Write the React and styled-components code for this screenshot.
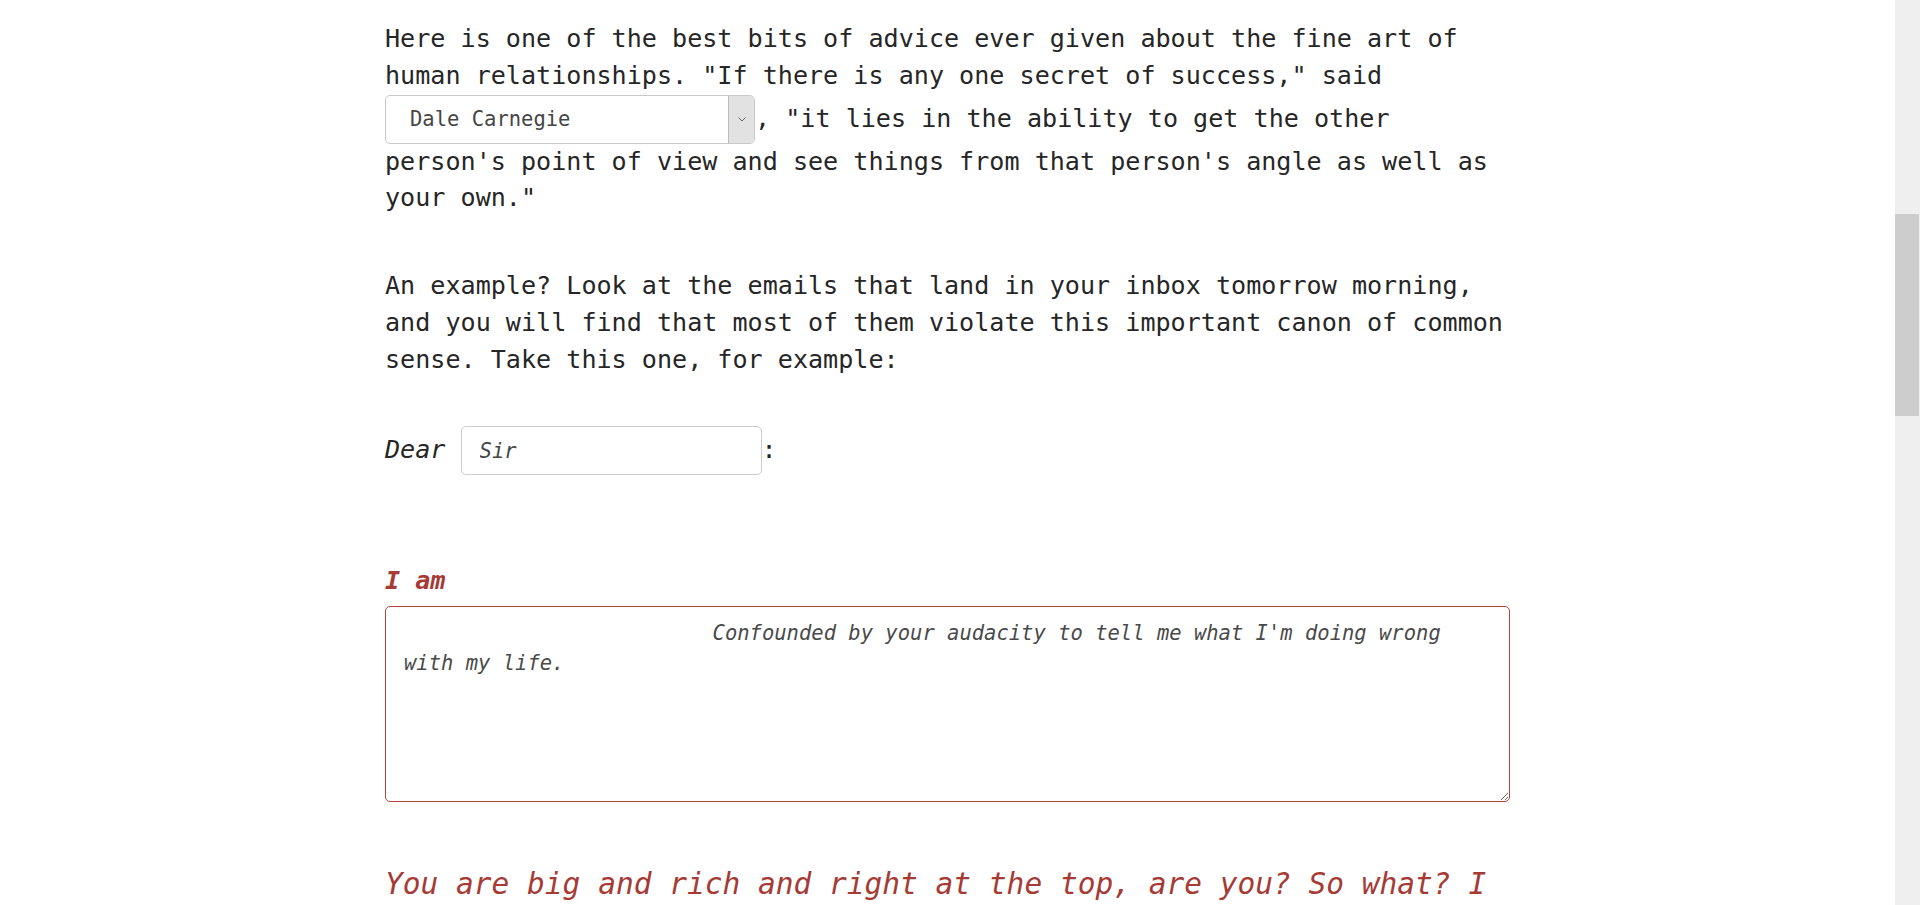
import React from "react";
import styled, { createGlobalStyle } from "styled-components";

const GlobalStyle = createGlobalStyle`
  html, body {
    margin: 0;
    padding: 0;
    background: #fff;
  }
  body {
    font-family: "DejaVu Sans Mono", "Liberation Mono", monospace;
    color: #262626;
    padding-right: 25px;
    overflow: hidden;
  }
`;

// the browser's scrollbar, drawn over the right edge
const ScrollRail = styled.aside`
  position: fixed;
  top: 0;
  right: 0;
  width: 25px;
  height: 100vh;
  background: #efefef;
`;

const ScrollThumb = styled.div`
  margin: 214px 1px 0 0;
  height: 202px;
  background: #cdcdcd;
`;

const Page = styled.main`
  max-width: 1125px;
  margin: 0 auto;
  padding-top: 21px;
  font-size: 25.1px;
  line-height: 36.75px;
`;

const Para = styled.p`
  margin: 0 0 ${(p) => p.$gap || 51}px;
`;

const PickerWrap = styled.span`
  display: inline-flex;
  width: 370px;
  height: 49px;
  box-sizing: border-box;
  border: 1px solid #c8c8c8;
  border-radius: 5px;
  background: #fff;
  overflow: hidden;
`;

const Picker = styled.select`
  appearance: none;
  flex: 1;
  border: none;
  outline: none;
  background: transparent;
  padding: 0 0 0 24px;
  font-family: inherit;
  font-size: 20.5px;
  color: #454545;
`;

const PickerArrow = styled.span`
  width: 25px;
  display: flex;
  align-items: center;
  justify-content: center;
  background: #e2e2e2;
  border-left: 1px solid #bcbcbc;
  color: #666;
`;

const Salutation = styled.p`
  margin: 0;
`;

const Dear = styled.em`
  font-style: italic;
`;

const NameInput = styled.input`
  width: 301px;
  height: 49px;
  box-sizing: border-box;
  border: 1px solid #cccccc;
  border-radius: 5px;
  padding: 0 0 0 18px;
  font-family: inherit;
  font-size: 20.5px;
  font-style: italic;
  color: #454545;
  outline: none;
  vertical-align: middle;
`;

const Label = styled.label`
  display: block;
  margin: 88px 0 6px;
  font-weight: bold;
  font-style: italic;
  color: #a63a35;
`;

const Reply = styled.textarea`
  display: block;
  width: 100%;
  height: 196px;
  box-sizing: border-box;
  margin: 0 0 60px;
  padding: 11px 18px;
  border: 1px solid #b0453f;
  border-radius: 5px;
  font-family: inherit;
  font-size: 20.5px;
  line-height: 30px;
  font-style: italic;
  color: #4a4a4a;
  outline: none;
`;

const Retort = styled.p`
  margin: 0 0 51px;
  font-size: 29.5px;
  line-height: 44.25px;
  font-style: italic;
  color: #a63a35;
`;

const Chevron = () => (
  <svg width="8" height="5" viewBox="0 0 8 5" fill="none">
    <path d="M0.5 0.5 L4 4 L7.5 0.5" stroke="currentColor" strokeWidth="1" />
  </svg>
);

const indent = " ".repeat(25);

export default function App() {
  return (
    <>
      <GlobalStyle />
      <Page>
        <Para>
          Here is one of the best bits of advice ever given about the fine art
          of human relationships. "If there is any one secret of success," said{" "}
          <PickerWrap>
            <Picker defaultValue="Dale Carnegie">
              <option>Dale Carnegie</option>
              <option>Henry Ford</option>
              <option>Abraham Lincoln</option>
            </Picker>
            <PickerArrow>
              <Chevron />
            </PickerArrow>
          </PickerWrap>
          , "it lies in the ability to get the other person's point of view and
          see things from that person's angle as well as your own."
        </Para>

        <Para $gap={48}>
          An example? Look at the emails that land in your inbox tomorrow
          morning, and you will find that most of them violate this important
          canon of common sense. Take this one, for example:
        </Para>

        <Salutation>
          <Dear>Dear</Dear> <NameInput defaultValue="Sir" />:
        </Salutation>

        <Label htmlFor="iam">I am</Label>
        <Reply
          id="iam"
          defaultValue={
            indent +
            "Confounded by your audacity to tell me what I'm doing wrong with my life."
          }
        />

        <Retort>
          You are big and rich and right at the top, are you? So what? I don't
          care if you are as big as General Motors and General Electric and the
          General Staff of the U.S. Army all combined.
        </Retort>
      </Page>
      <ScrollRail aria-hidden="true">
        <ScrollThumb />
      </ScrollRail>
    </>
  );
}
